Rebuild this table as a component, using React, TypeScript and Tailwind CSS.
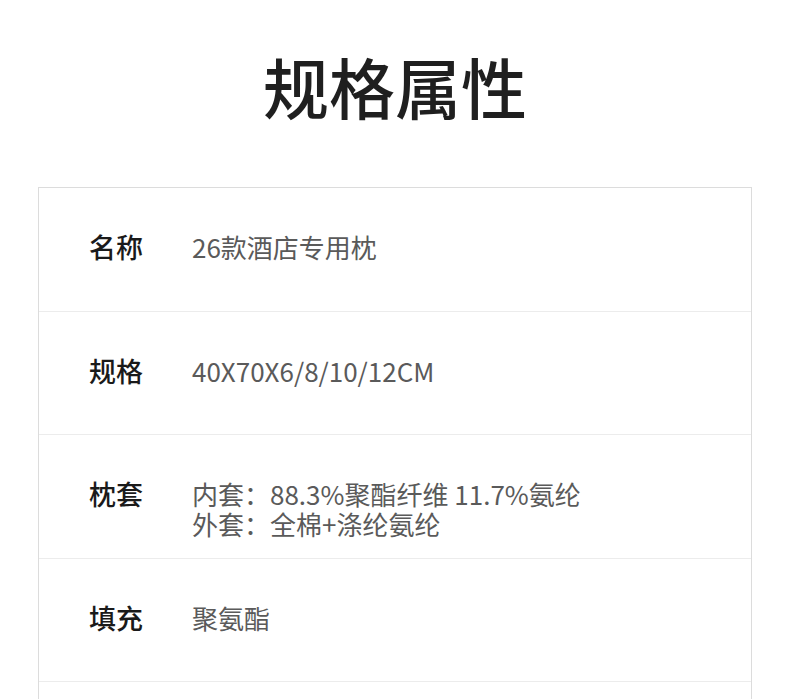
const specs: { label: string; lines: string[] }[] = [
  { label: "名称", lines: ["26款酒店专用枕"] },
  { label: "规格", lines: ["40X70X6/8/10/12CM"] },
  {
    label: "枕套",
    lines: ["内套：88.3%聚酯纤维 11.7%氨纶", "外套：全棉+涤纶氨纶"],
  },
  { label: "填充", lines: ["聚氨酯"] },
  { label: "", lines: [""] },
];

export default function App() {
  return (
    <div
      className="min-h-[699px] w-full bg-white"
      style={{ fontFamily: '"Noto Sans CJK SC", "Noto Sans", sans-serif' }}
    >
      {/* Title */}
      <h1 className="pt-[52px] text-center text-[66px] font-medium leading-none text-[#1f1f1f]">
        规格属性
      </h1>

      {/* Spec table */}
      <div className="mx-[38px] mt-[69px] border border-b-0 border-[#dcdcdc]">
        {specs.map((row, i) => (
          <div
            key={i}
            className="flex h-[123.5px] border-b border-[#ececec] pl-[50px] pt-[44px]"
          >
            <div className="w-[103px] shrink-0 text-[27px] font-medium leading-[30px] text-[#1a1a1a]">
              {row.label}
            </div>
            <div className="text-[26px] font-normal leading-[30px] text-[#5a5a5a]">
              {row.lines.map((line, j) => (
                <div key={j}>{line}</div>
              ))}
            </div>
          </div>
        ))}
      </div>
    </div>
  );
}
